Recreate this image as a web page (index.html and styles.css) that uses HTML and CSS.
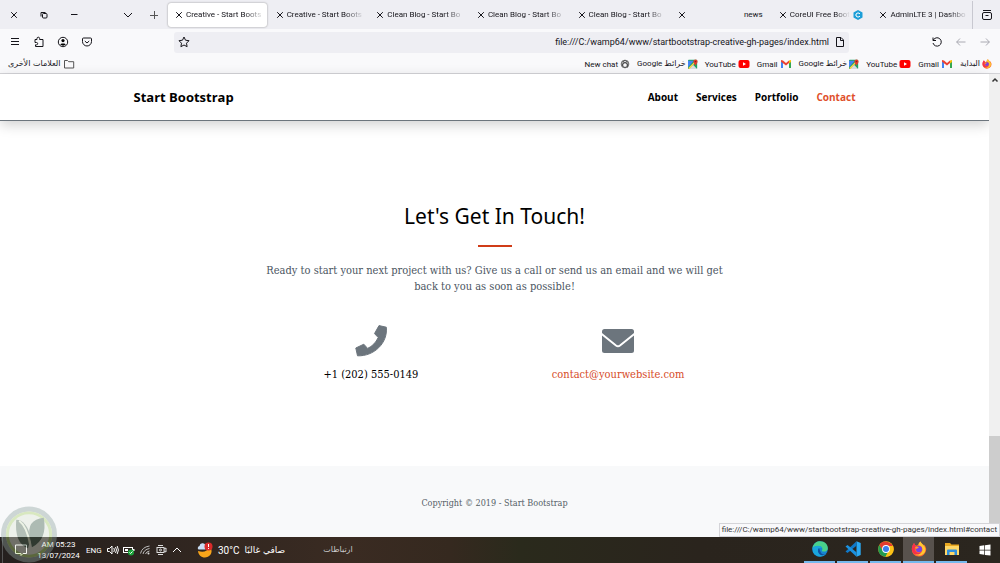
FILE: index.html
```html
<!DOCTYPE html>
<html lang="en">
<head>
<meta charset="utf-8">
<meta name="viewport" content="width=device-width, initial-scale=1">
<title>Creative - Start Bootstrap Theme</title>
<link rel="stylesheet" href="styles.css">
</head>
<body>
<svg class="defs" aria-hidden="true">
  <symbol id="x" viewBox="0 0 8 8"><path d="M1.2 1.2l5.6 5.6M6.8 1.2L1.2 6.8" fill="none" stroke="currentColor"/></symbol>
  <symbol id="maps" viewBox="0 0 12 12"><rect x="0" y="1" width="11" height="11" rx="1" fill="#1fa463"/><path d="M1 12l5-5 5 5z" fill="#d8dde3"/><path d="M0 2v8l7-8z" fill="#4285f4"/><path d="M0 11L9 2l1 1-8 9z" fill="#fbd34b"/><path d="M9 8C8 6 6.500 5 6.500 3a2.500 2.500 0 015 0C11.500 5 10 6 9 8z" fill="#e33b2e"/><circle cx="9" cy="3" r="1" fill="#8c1d18"/></symbol>
  <symbol id="yt" viewBox="0 0 12 12"><rect x="0.500" y="2" width="11" height="8" rx="2" fill="#f00"/><path d="M5 4.200v3.600L8 6z" fill="#fff"/></symbol>
  <symbol id="gmail" viewBox="0 0 12 12"><path d="M1 3v7h2V4z" fill="#4285f4"/><path d="M11 3v7H9V4z" fill="#34a853"/><path d="M1 2l2 .5 3 2.500 3-2.500V5L6 7.500 1 3.800z" fill="#ea4335"/><path d="M9 2.500L11 2v2L9 5.500z" fill="#fbbc04"/></symbol>
  <symbol id="fox" viewBox="0 0 20 20"><path d="M18.500 8c-.6-2-1.700-3.300-2.700-4 .4 1 .4 1.500.4 2C15 3.500 12.500 2.800 12 .5c-2 1-2.800 3-2.700 4.500-1 .1-2 .5-2.700 1C5.500 5.500 4 4 4 2.500 2.500 4 1.200 6.800 1 10a9 9 0 0018 1c.1-1 0-2-.5-3z" fill="#ff6b2c"/><path d="M16.200 6C15 3.500 12.500 2.800 12 .5c-2 1-2.800 3-2.700 4.500 3 1 5.500 3 5 6.500-.4 3-3 4.500-5.300 4.500-3 0-5.500-2-5.500-5 0 5 3 7 6.500 7 4.500 0 8-3 8-7.500 0-1.500-.8-3.500-1.800-4.500z" fill="#ffc832"/><path d="M1 10c.2-3.200 1.500-6 3-7.500C4 4 5.500 5.500 6.600 6 4 8 4 12 7 14c2 1.300 4 1 6 0-2 3-5 3.500-8 2.500C2.500 15.500 1 13 1 10z" fill="#f5304c"/><circle cx="10" cy="10.200" r="3.800" fill="#7542e5"/><path d="M5 8c2-1.500 4-1 5 .5-1.500 0-2 1-3 1.500z" fill="#ff9a2c"/></symbol>
</svg>

<header class="browser">
  <div class="tabstrip">
    <div class="window-controls">
      <button class="icon-btn" aria-label="Close window"><svg class="i8"><use href="#x"/></svg></button>
      <button class="icon-btn" aria-label="Restore"><svg class="i8" viewBox="0 0 8 8"><g fill="none" stroke="currentColor"><rect x="2.500" y="2.500" width="4.500" height="4.500" rx="1"/><path d="M1 5.500v-4h4.500"/></g></svg></button>
      <button class="icon-btn" aria-label="Minimize"><svg class="i8" viewBox="0 0 8 8"><path d="M1 3.500h6.500" stroke="currentColor"/></svg></button>
      <button class="icon-btn list-tabs" aria-label="List all tabs"><svg class="i10" viewBox="0 0 10 10"><path d="M1 3l4 4 4-4" fill="none" stroke="currentColor"/></svg></button>
      <button class="icon-btn new-tab" aria-label="New tab"><svg class="i10" viewBox="0 0 10 10"><path d="M1 5.500h8M5.500 1v8" stroke="#555"/></svg></button>
    </div>
    <nav class="tabs" aria-label="Tabs">
      <button class="tab active"><svg class="i8"><use href="#x"/></svg><span class="tab-title">Creative - Start Boots</span></button>
      <button class="tab"><svg class="i8"><use href="#x"/></svg><span class="tab-title">Creative - Start Boots</span></button>
      <button class="tab"><svg class="i8"><use href="#x"/></svg><span class="tab-title">Clean Blog - Start Bo</span></button>
      <button class="tab"><svg class="i8"><use href="#x"/></svg><span class="tab-title">Clean Blog - Start Bo</span></button>
      <button class="tab"><svg class="i8"><use href="#x"/></svg><span class="tab-title">Clean Blog - Start Bo</span></button>
      <button class="tab"><svg class="i8"><use href="#x"/></svg><span class="tab-title short">news</span></button>
      <button class="tab"><svg class="i8"><use href="#x"/></svg><span class="tab-title">CoreUI Free Boot</span><svg class="i10 favicon" viewBox="0 0 10 10"><path d="M5 0l4.500 2.500v5L5 10 .5 7.500v-5z" fill="#1b9ed8"/><path d="M7 3.800L5 2.800 3 4v2l2 1.200 2-1" fill="none" stroke="#fff"/></svg></button>
      <button class="tab"><svg class="i8"><use href="#x"/></svg><span class="tab-title">AdminLTE 3 | Dashbo</span></button>
    </nav>
    <button class="icon-btn view" aria-label="Firefox View"><svg class="i12" viewBox="0 0 12 12"><g fill="none" stroke="currentColor"><path d="M2 1.500h8"/><rect x="1.500" y="3.500" width="9" height="7" rx="1.500"/><path d="M4.500 6.500h3"/></g></svg></button>
  </div>

  <div class="toolbar">
    <div class="tools">
      <button class="icon-btn" aria-label="Menu"><svg class="i10" viewBox="0 0 10 10"><path d="M1 1.500h8M1 4.500h8M1 7.500h8" stroke="currentColor"/></svg></button>
      <button class="icon-btn" aria-label="Extensions"><svg class="i12" viewBox="0 0 12 12"><path d="M4 3.500V2.500a1.300 1.300 0 012.600 0v1H10v7H2.500V8.800H3.500a1.100 1.100 0 000-2.300H2v-3z" fill="none" stroke="currentColor"/></svg></button>
      <button class="icon-btn" aria-label="Account"><svg class="i12" viewBox="0 0 12 12"><circle cx="6" cy="6" r="4.700" fill="none" stroke="currentColor"/><circle cx="6" cy="4.600" r="1.600"/><path d="M3.200 8.500c0-1.500 5.600-1.500 5.600 0-1.500 1.500-4 1.500-5.600 0z"/></svg></button>
      <button class="icon-btn" aria-label="Pocket"><svg class="i12" viewBox="0 0 12 12"><path d="M2.500 2h7q1 0 1 1v2.500a4.500 4.500 0 01-9 0V3q0-1 1-1zM3.800 5L6 7l2.200-2" fill="none" stroke="currentColor"/></svg></button>
    </div>
    <div class="urlbar">
      <svg class="i12" viewBox="0 0 12 12"><path d="M6 1l1.500 3.200 3.500.5-2.500 2.500.6 3.500L6 9l-3.100 1.700.6-3.500L1 4.700l3.500-.5z" fill="none" stroke="currentColor"/></svg>
      <input class="url" type="text" aria-label="Address" value="file:///C:/wamp64/www/startbootstrap-creative-gh-pages/index.html">
      <svg class="i10" viewBox="0 0 10 10"><path d="M1.500.5h4.500l2.500 2.500v6.500h-7zM5.500.5v3h3" fill="none" stroke="currentColor"/></svg>
    </div>
    <div class="history">
      <button class="icon-btn" aria-label="Reload"><svg class="i12" viewBox="0 0 12 12"><path d="M2 1.500v3h3M2.200 4.300A4.200 4.200 0 112 7" fill="none" stroke="currentColor"/></svg></button>
      <button class="icon-btn dim" aria-label="Forward"><svg class="i10" viewBox="0 0 10 10"><path d="M9.500 5h-9M4 1.500L.7 5 4 8.500" fill="none" stroke="currentColor"/></svg></button>
      <button class="icon-btn dim" aria-label="Back"><svg class="i10" viewBox="0 0 10 10"><path d="M.5 5h9M6 1.500L9.300 5 6 8.500" fill="none" stroke="currentColor"/></svg></button>
    </div>
  </div>

  <nav class="bookmarks" aria-label="Bookmarks">
    <a class="bookmark other" href="#"><span class="ar">العلامات الأخرى</span><svg class="i12" viewBox="0 0 12 12"><path d="M1.500 10V2.500h3l1.200 1.200h5V10z" fill="none" stroke="#555"/></svg></a>
    <a class="bookmark" href="#">New chat<svg class="i10" viewBox="0 0 12 12"><g fill="none" stroke="#444"><circle cx="6" cy="6" r="4.600"/><path d="M3 3l6 3v4M9 3L3 6v3M6 1.500L3.500 4v4L6 10.500 8.500 8V4z"/></g></svg></a>
    <a class="bookmark" href="#"><span>Google <span class="ar">خرائط</span></span><svg class="i10"><use href="#maps"/></svg></a>
    <a class="bookmark" href="#">YouTube<svg class="i12"><use href="#yt"/></svg></a>
    <a class="bookmark" href="#">Gmail<svg class="i12"><use href="#gmail"/></svg></a>
    <a class="bookmark" href="#"><span>Google <span class="ar">خرائط</span></span><svg class="i10"><use href="#maps"/></svg></a>
    <a class="bookmark" href="#">YouTube<svg class="i12"><use href="#yt"/></svg></a>
    <a class="bookmark" href="#">Gmail<svg class="i12"><use href="#gmail"/></svg></a>
    <a class="bookmark" href="#"><span class="ar">البداية</span><svg class="i10"><use href="#fox"/></svg></a>
  </nav>
</header>

<div class="viewport">
  <div class="page">
    <header class="navbar">
      <div class="container nav-row">
        <a class="brand" href="#">Start Bootstrap</a>
        <nav class="links">
          <a href="#">About</a>
          <a href="#">Services</a>
          <a href="#">Portfolio</a>
          <a class="current" href="#contact">Contact</a>
        </nav>
      </div>
    </header>
    <main class="contact" id="contact">
      <h1>Let's Get In Touch!</h1>
      <hr class="divider">
      <p class="lead">Ready to start your next project with us? Give us a call or send us an email and we will get back to you as soon as possible!</p>
      <div class="methods">
        <div class="method">
          <svg class="big" viewBox="0 0 32 32"><path d="M24 .6L31.300 2.200C33 18 19 31.500 2.500 30.800L.8 23 8.800 19.200l3.800 4.200C17 21.500 21 17.500 23.200 12.500L19.500 8.600z" fill="#6c757d" stroke="#6c757d" stroke-linejoin="round"/></svg>
          <span>+1 (202) 555-0149</span>
        </div>
        <div class="method">
          <svg class="big" viewBox="0 0 32 32"><rect y="4" width="32" height="24" rx="2.500" fill="#6c757d"/><path d="M-1 8.500L14 20.500q2 1.500 4 0L33 8.500" fill="none" stroke="#fff" stroke-width="2"/></svg>
          <a href="mailto:contact@yourwebsite.com">contact@yourwebsite.com</a>
        </div>
      </div>
    </main>
    <footer class="footer">Copyright © 2019 - Start Bootstrap</footer>
  </div>
  <div class="scrollbar" aria-hidden="true">
    <svg class="i8" viewBox="0 0 8 8"><path d="M1.500 5.500L4 3l2.500 2.500" fill="none" stroke="#333" stroke-width="1.500"/></svg>
    <div class="thumb"></div>
  </div>
  <div class="status">file:///C:/wamp64/www/startbootstrap-creative-gh-pages/index.html#contact</div>
</div>

<footer class="taskbar">
  <button class="task-btn notes" aria-label="Notifications"><svg class="i12" viewBox="0 0 12 12"><path d="M.5 1h11v8.500H8L6 11.500V9.500H.5z" fill="none" stroke="currentColor"/></svg></button>
  <time class="clock"><span>AM 05:23</span><span>13/07/2024</span></time>
  <span class="lang">ENG</span>
  <div class="tray">
    <svg class="i12" viewBox="0 0 12 12"><path d="M.5 4.500h2L5 2v8L2.500 7.500h-2zM6.800 4q1.200 2 0 4M8.500 3q2 3 0 6M10.200 2q2.400 4 0 8" fill="none" stroke="currentColor"/></svg>
    <svg class="i12" viewBox="0 0 12 12"><rect x=".5" y="3.500" width="9" height="5" fill="none" stroke="currentColor"/><path d="M10 5h1.500v2H10zM2 5h3v2H2z" fill="currentColor"/><circle cx="8" cy="8.500" r="3" fill="#1aa33a"/><path d="M6.500 8.500l1 1 2-2" stroke="#fff" fill="none"/></svg>
    <svg class="i12" viewBox="0 0 12 12"><path d="M1.500 9.500Q3 3 10.500 2M4 10Q5 5.500 10.500 4.500M6.500 10q1-2.500 4-3" fill="none" stroke="#bbb"/><circle cx="9.500" cy="9.500" r="1" fill="#ddd"/></svg>
    <svg class="i12" viewBox="0 0 12 12"><g fill="none" stroke="#ddd"><path d="M3 1.500h5M3 10.500h5"/><rect x="2" y="3.500" width="7" height="5"/><circle cx="5.500" cy="6" r="1"/><path d="M9 5l2-1v4L9 7"/></g></svg>
    <svg class="i12" viewBox="0 0 12 12"><path d="M2 8l4-4 4 4" fill="none" stroke="currentColor"/></svg>
  </div>
  <div class="weather">
    <svg class="i16" viewBox="0 0 16 16"><path d="M1 9c6 2 9 0 12-4 3 3 2 10-5 10.500C4 15.500 1.500 13 1 9z" fill="#f9a51a"/><path d="M1.500 7.500a2 2 0 011-3.500A3.200 3.200 0 018.500 3v4.500z" fill="#c9def5"/><circle cx="11.500" cy="4.500" r="4" fill="#d92b2b"/><path d="M11.500 2v3M11.500 6v1" stroke="#fff"/></svg>
    <span class="temp">30°C</span><span class="ar forecast" dir="rtl">صافي غالبًا</span>
  </div>
  <span class="ar related">ارتباطات</span>
  <nav class="apps" aria-label="Applications">
    <button class="task-btn app" aria-label="Edge"><svg class="i16" viewBox="0 0 16 16"><circle cx="8" cy="8" r="7.800" fill="#1785d3"/><path d="M.5 7C1.500 2 5 .2 8 .2c5 0 8 3.500 7.800 7 0 2.500-2.500 4-5.300 3.200-.8-.3-.6-.9-.2-1.700C11.300 5 5 3.500.5 7z" fill="#49d18b"/><path d="M.5 7C3 4 9 4 10.300 7 7 6 5.500 9 7 12c1.500 2.500 5 2.500 7.500 1C10 17 3 16 1 11z" fill="#1aa5dc"/><path d="M7 7c-2 2-1 6 2 7 2 .5 4 0 5.500-1-3.500 1.200-6-.5-6.300-3z" fill="#104f9e"/></svg></button>
    <button class="task-btn app" aria-label="Visual Studio Code"><svg class="i16" viewBox="0 0 16 16"><path d="M11.500.3L15.700 2v12l-4.200 1.700z" fill="#2aa9f3"/><path d="M11.500.3v4.500L2.500 12 .5 10.500z" fill="#0f78c8"/><path d="M11.500 15.700v-4.500L2.500 4 .5 5.500z" fill="#1b91df"/></svg></button>
    <button class="task-btn app" aria-label="Chrome"><svg class="i16" viewBox="0 0 16 16"><circle cx="8" cy="8" r="7.800" fill="#fbc116"/><path d="M8 8H15.500A7.800 7.800 0 001.300 4L5 10z" fill="#e33b2e"/><path d="M1.300 4A7.800 7.800 0 007.500 15.800L11 10H5z" fill="#229a50"/><path d="M15 5a7.800 7.800 0 01-7.500 10.800L11.500 8 9 5z" fill="#fbc116"/><circle cx="8" cy="8" r="3.900" fill="#fff"/><circle cx="8" cy="8" r="3" fill="#3b7ded"/></svg></button>
    <button class="task-btn app selected" aria-label="Firefox"><svg class="i16"><use href="#fox"/></svg></button>
    <button class="task-btn app" aria-label="File Explorer"><svg class="i16" viewBox="0 0 16 16"><path d="M1 2h5l1.500 1.500H15V14H1z" fill="#e9a820"/><path d="M1 5h14v9H1z" fill="#ffd867"/><path d="M3 14V9.500q0-1 1-1h8q1 0 1 1V14h-2.500v-3h-5v3z" fill="#2f8fdb"/></svg></button>
    <button class="task-btn start" aria-label="Start"><svg class="i12" viewBox="0 0 12 12"><path d="M.5 2L5.300 1.300V5.700H.5zM6 1.200L11.500.5v5.200H6zM.5 6.400H5.300v4.400L.5 10.100zM6 6.400h5.500v5.200L6 10.900z" fill="#fff"/></svg></button>
  </nav>
  <svg class="watermark" viewBox="0 0 58 58" aria-hidden="true"><circle cx="29" cy="29" r="26" fill="#dfe6d6" stroke="#8fa39f" stroke-width="5"/><circle cx="29" cy="29" r="22" fill="none" stroke="#a9cf6c" stroke-width="3"/><path d="M16 14q10 0 15 18l-3 11Q14 38 16 14z" fill="#4d6a55"/><path d="M44 12Q26 14 30 32l2 10Q48 34 44 12z" fill="#3f5f4c"/><path d="M19 15q8 6 11 24" stroke="#dcebc8" stroke-width="2" fill="none"/></svg>
</footer>
</body>
</html>
```
FILE: styles.css
```css
* { box-sizing: border-box; }

body {
  margin: 0;
  min-height: 100vh;
  display: flex;
  flex-direction: column;
  font-family: Roboto, "Noto Sans", "DejaVu Sans", sans-serif;
  font-size: 8px;
  color: #15141a;
  background: #fff;
}

button { font: inherit; color: inherit; border: 0; padding: 0; background: none; }
a { color: inherit; text-decoration: none; }
svg { flex: none; display: block; }

.defs { position: absolute; width: 0; height: 0; }
.i8 { width: 8px; height: 8px; }
.i10 { width: 10px; height: 10px; }
.i12 { width: 12px; height: 12px; }
.i16 { width: 16px; height: 16px; }
.ar { font-family: "DejaVu Sans", sans-serif; font-size: 8px; line-height: 10px; }

.icon-btn {
  display: grid;
  place-items: center;
  width: 24px;
  height: 24px;
}

/* Browser chrome */
.browser { background: #f9f9fb; border-bottom: 1px solid #d4d4d8; }

.tabstrip {
  display: flex;
  align-items: center;
  height: 29px;
  background: #eeeef3;
}
.window-controls {
  display: flex;
  flex: none;
  width: 167px;
  padding-left: 2px;
  gap: 6px;
}
.list-tabs { margin-left: 24px; }
.new-tab { margin-left: -4px; }
.tabs { display: flex; flex: 1; min-width: 0; }
.tab {
  display: flex;
  align-items: center;
  flex: 1;
  min-width: 0;
  height: 24px;
  margin: 0 1px;
  padding: 0 3px 0 7px;
  gap: 3px;
  border-radius: 3px;
}
.tab.active { background: #fff; box-shadow: 0 0 2px #888; }
.tab-title {
  flex: 1;
  min-width: 0;
  overflow: hidden;
  text-align: left;
  white-space: nowrap;
  mask-image: linear-gradient(to right, #000 75%, transparent);
}
.tab-title.short { text-align: right; mask-image: none; padding-right: 4px; }
.favicon { margin-right: 4px; }
.view { width: 28px; height: 28px; border-left: 1px solid #c8c8d0; }

.toolbar { display: flex; align-items: center; height: 26px; }
.tools { display: flex; flex: none; width: 174px; padding-left: 3px; }
.urlbar {
  display: flex;
  align-items: center;
  flex: 1;
  min-width: 0;
  height: 21px;
  padding: 0 4px;
  gap: 6px;
  border-radius: 3px;
  background: #eeeef3;
}
.url {
  flex: 1;
  min-width: 0;
  padding: 0;
  border: 0;
  background: none;
  font: inherit;
  font-size: 9px;
  color: inherit;
  text-align: right;
}
.history { display: flex; flex: none; padding: 0 3px 0 76px; }
.dim { color: #aaaab2; }

.bookmarks {
  display: flex;
  align-items: center;
  height: 18px;
  padding: 0 8px;
  gap: 7px;
}
.bookmark { display: flex; align-items: center; gap: 2px; white-space: nowrap; }
.other { margin-right: auto; }

/* Web page */
.viewport { position: relative; display: flex; flex: 1; }
.page { display: flex; flex: 1; flex-direction: column; min-width: 0; }

.navbar {
  border-bottom: 1px solid #6c757d;
  box-shadow: 0 4px 12px rgba(0, 0, 0, 0.18);
  font-family: "Open Sans", "Noto Sans", sans-serif;
  font-weight: 700;
  color: #000;
}
.container { width: 73%; margin: 0 auto; }
.nav-row {
  display: flex;
  align-items: center;
  justify-content: space-between;
  height: 46px;
}
.brand { font-size: 13px; }
.links { display: flex; gap: 18px; font-size: 10px; }
.current { color: #e0502c; }

.contact {
  flex: 1;
  padding: 79px 0;
  text-align: center;
  font-family: "DejaVu Serif Condensed", "Liberation Serif", serif;
  font-size: 11px;
  line-height: 16px;
  color: #000;
}
.contact h1 {
  margin: 0;
  font-family: "Noto Sans", sans-serif;
  font-size: 21px;
  line-height: 32px;
  font-weight: 400;
}
.divider {
  width: 34px;
  height: 2px;
  margin: 13px auto 16px;
  border: 0;
  background: #d03c18;
}
.lead { width: 48%; margin: 0 auto; color: #4b555f; }
.methods { display: flex; width: 50%; margin: 30px auto 0; }
.method { display: flex; flex: 1; flex-direction: column; align-items: center; gap: 10px; }
.method a { color: #d64a28; }
.big { width: 32px; height: 32px; }

.footer {
  padding: 31px 0 28px;
  background: #f8f9fa;
  font-family: "DejaVu Serif Condensed", "Liberation Serif", serif;
  font-size: 9px;
  line-height: 12px;
  text-align: center;
  color: #545d66;
}

.scrollbar {
  display: flex;
  flex: none;
  flex-direction: column;
  align-items: center;
  justify-content: space-between;
  width: 11px;
  padding-top: 2px;
  background: #f0f0f0;
}
.thumb { width: 100%; height: 22%; background: #cdcdcd; }

.status {
  position: absolute;
  right: 0;
  bottom: 0;
  padding: 0 2px;
  border: 1px solid #d4d4d8;
  line-height: 12px;
  background: #f9f9fb;
  color: #333;
}

/* Taskbar */
.taskbar {
  position: relative;
  display: flex;
  align-items: center;
  height: 26px;
  background: linear-gradient(to right, #25201e, #3a2b22 35%, #35291f 45%, #2a2a1c 52%, #2a241d 70%, #2b261f);
  color: #fff;
}
.task-btn { display: grid; place-items: center; width: 31px; height: 26px; }
.notes { margin-left: 2px; width: 36px; border-left: 1px solid #555; }
.clock {
  display: flex;
  flex-direction: column;
  align-items: center;
  width: 41px;
  line-height: 11px;
}
.lang { width: 17px; margin-left: 7px; }
.tray { display: flex; gap: 4px; margin-left: 4px; }
.weather { display: flex; align-items: center; gap: 5px; margin-left: 14px; }
.temp { font-size: 10px; }
.forecast { font-size: 9px; line-height: 12px; }
.related { margin-left: 38px; color: #ccc; }
.apps { display: flex; gap: 2px; margin-left: auto; }
.app { border-bottom: 2px solid #76b9ed; }
.selected { background: #58524d; }

.watermark {
  position: absolute;
  left: 0;
  bottom: 0;
  width: 58px;
  height: 57px;
  opacity: 0.4;
  pointer-events: none;
}
```
